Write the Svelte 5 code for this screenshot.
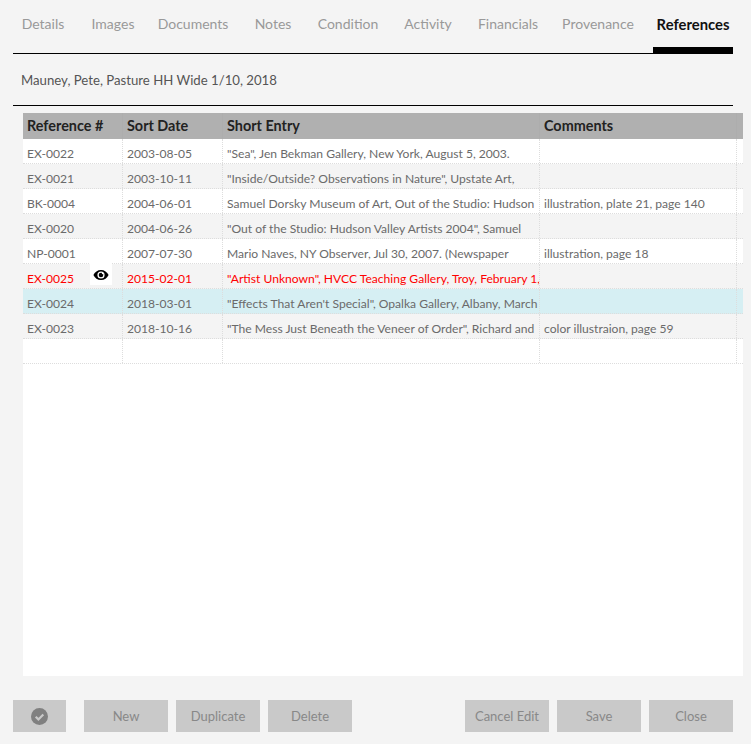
<script>
  const tabs = ['Details','Images','Documents','Notes','Condition','Activity','Financials','Provenance','References'];
  const rows = [
    {r:'EX-0022',d:'2003-08-05',s:'"Sea", Jen Bekman Gallery, New York, August 5, 2003.',c:''},
    {r:'EX-0021',d:'2003-10-11',s:'"Inside/Outside? Observations in Nature", Upstate Art,',c:''},
    {r:'BK-0004',d:'2004-06-01',s:'Samuel Dorsky Museum of Art, Out of the Studio: Hudson',c:'illustration, plate 21, page 140'},
    {r:'EX-0020',d:'2004-06-26',s:'"Out of the Studio: Hudson Valley Artists 2004", Samuel',c:''},
    {r:'NP-0001',d:'2007-07-30',s:'Mario Naves, NY Observer, Jul 30, 2007. (Newspaper',c:'illustration, page 18'},
    {r:'EX-0025',d:'2015-02-01',s:'"Artist Unknown", HVCC Teaching Gallery, Troy, February 1,',c:'',k:'red'},
    {r:'EX-0024',d:'2018-03-01',s:'"Effects That Aren\'t Special", Opalka Gallery, Albany, March',c:'',k:'sel'},
    {r:'EX-0023',d:'2018-10-16',s:'"The Mess Just Beneath the Veneer of Order", Richard and',c:'color illustraion, page 59'},
    {r:'',d:'',s:'',c:''}
  ];
</script>

<div class="page">
  <nav class="tabs">
    {#each tabs as t}
      <div class="tab" class:active={t === 'References'}>{t}</div>
    {/each}
  </nav>
  <div class="title">Mauney, Pete, Pasture HH Wide 1/10, 2018</div>
  <div class="table">
    <div class="row head">
      <div class="cell">Reference #</div>
      <div class="cell">Sort Date</div>
      <div class="cell">Short Entry</div>
      <div class="cell">Comments</div>
    </div>
    {#each rows as row, i}
      <div class="row body {row.k ?? ''}" class:alt={i % 2 === 1}>
        <div class="cell">{row.r}</div>
        <div class="cell">{row.d}</div>
        <div class="cell">{row.s}</div>
        <div class="cell">{row.c}</div>
        {#if row.k === 'red'}
          <div class="eye">
            <svg width="16" height="12" viewBox="0 0 16 12">
              <path fill-rule="evenodd" fill="#000" d="M8 1C4.600 1 1.800 3 .4 6c1.400 3 4.200 5 7.600 5s6.200-2 7.600-5C14.200 3 11.400 1 8 1zm0 1.400a3.600 3.600 0 1 1 0 7.200 3.600 3.600 0 0 1 0-7.200z"/>
              <path fill="#000" d="M8 3.700a2.300 2.300 0 1 0 2.300 2.300c0-.3-.1-.6-.2-.9a1 1 0 0 1-1.200-1.200c-.3-.1-.6-.2-.9-.2z"/>
            </svg>
          </div>
        {/if}
      </div>
    {/each}
  </div>
  <footer class="buttons">
    <div class="group">
      <button class="check" aria-label="Check">
        <svg width="17" height="17" viewBox="0 0 17 17">
          <circle cx="8.500" cy="8.500" r="8.500" fill="#808080"/>
          <path d="M4.700 8.800l2.700 2.600 4.900-5" fill="none" stroke="#c9c9c9" stroke-width="2.200"/>
        </svg>
      </button>
      <button>New</button>
      <button>Duplicate</button>
      <button>Delete</button>
    </div>
    <div class="group right">
      <button>Cancel Edit</button>
      <button>Save</button>
      <button>Close</button>
    </div>
  </footer>
</div>

<style>
  :global(body) { margin: 0; background: #f4f4f4; }
  .page {
    width: 751px; height: 744px; box-sizing: border-box; overflow: hidden;
    padding: 0 0 0 13px; background: #f4f4f4;
    font-family: Lato, "Liberation Sans", sans-serif; color: #666;
  }
  .tabs {
    width: 720px; height: 54px; box-sizing: border-box;
    display: grid; grid-template-columns: 60px 60px 80px 60px 70px 70px 70px 90px 80px; column-gap: 10px;
    border-bottom: 1px solid #000;
  }
  .tab { height: 53px; box-sizing: border-box; padding-top: 14px; text-align: center; font-size: 14px; line-height: 20px; color: #999; white-space: nowrap; }
  .tab.active { color: #111; font-weight: 700; font-size: 14.800px; border-bottom: 6px solid #000; }
  .title {
    width: 720px; height: 52px; box-sizing: border-box;
    padding: 16px 0 0 8px; font-size: 13.200px; line-height: 20px; color: #555;
    border-bottom: 1px solid #000;
  }
  .table {
    margin: 7px 0 0 10px; width: 720px; height: 563px; background: #fff;
  }
  .row { display: grid; grid-template-columns: 100px 100px 317px 197px 6px; }
  .head { height: 26px; background: #b0b0b0; }
  .head .cell { font-weight: 700; font-size: 14.400px; line-height: 26px; color: #222; border-right: 1px solid #adadad; }
  .body { position: relative; height: 25px; box-sizing: border-box; border-bottom: 1px dotted #ddd; }
  .alt { background: #f4f4f4; }
  .cell {
    padding-left: 4px; box-sizing: border-box; overflow: hidden; white-space: nowrap;
  }
  .body .cell { font-size: 12.100px; line-height: 29px; border-right: 1px dotted #ddd; height: 24px; color: #6a6a6a; }
  .body.red .cell { color: #f00; }
  .sel { background: #d6eff3; }
  .eye {
    position: absolute; left: 67px; top: -1px; width: 22px; height: 22px; box-sizing: border-box; padding-top: 2px; background: #fff;
    display: flex; align-items: center; justify-content: center;
  }
  .buttons {
    margin-top: 24px; width: 720px; display: flex; justify-content: space-between;
  }
  .group { display: flex; gap: 8px; }
  button {
    width: 84px; height: 32px; border: 0; padding: 0; background: #c9c9c9; color: #888;
    font-family: inherit; font-size: 13px; display: flex; align-items: center; justify-content: center;
  }
  .check { width: 53px; margin-right: 10px; }
</style>
